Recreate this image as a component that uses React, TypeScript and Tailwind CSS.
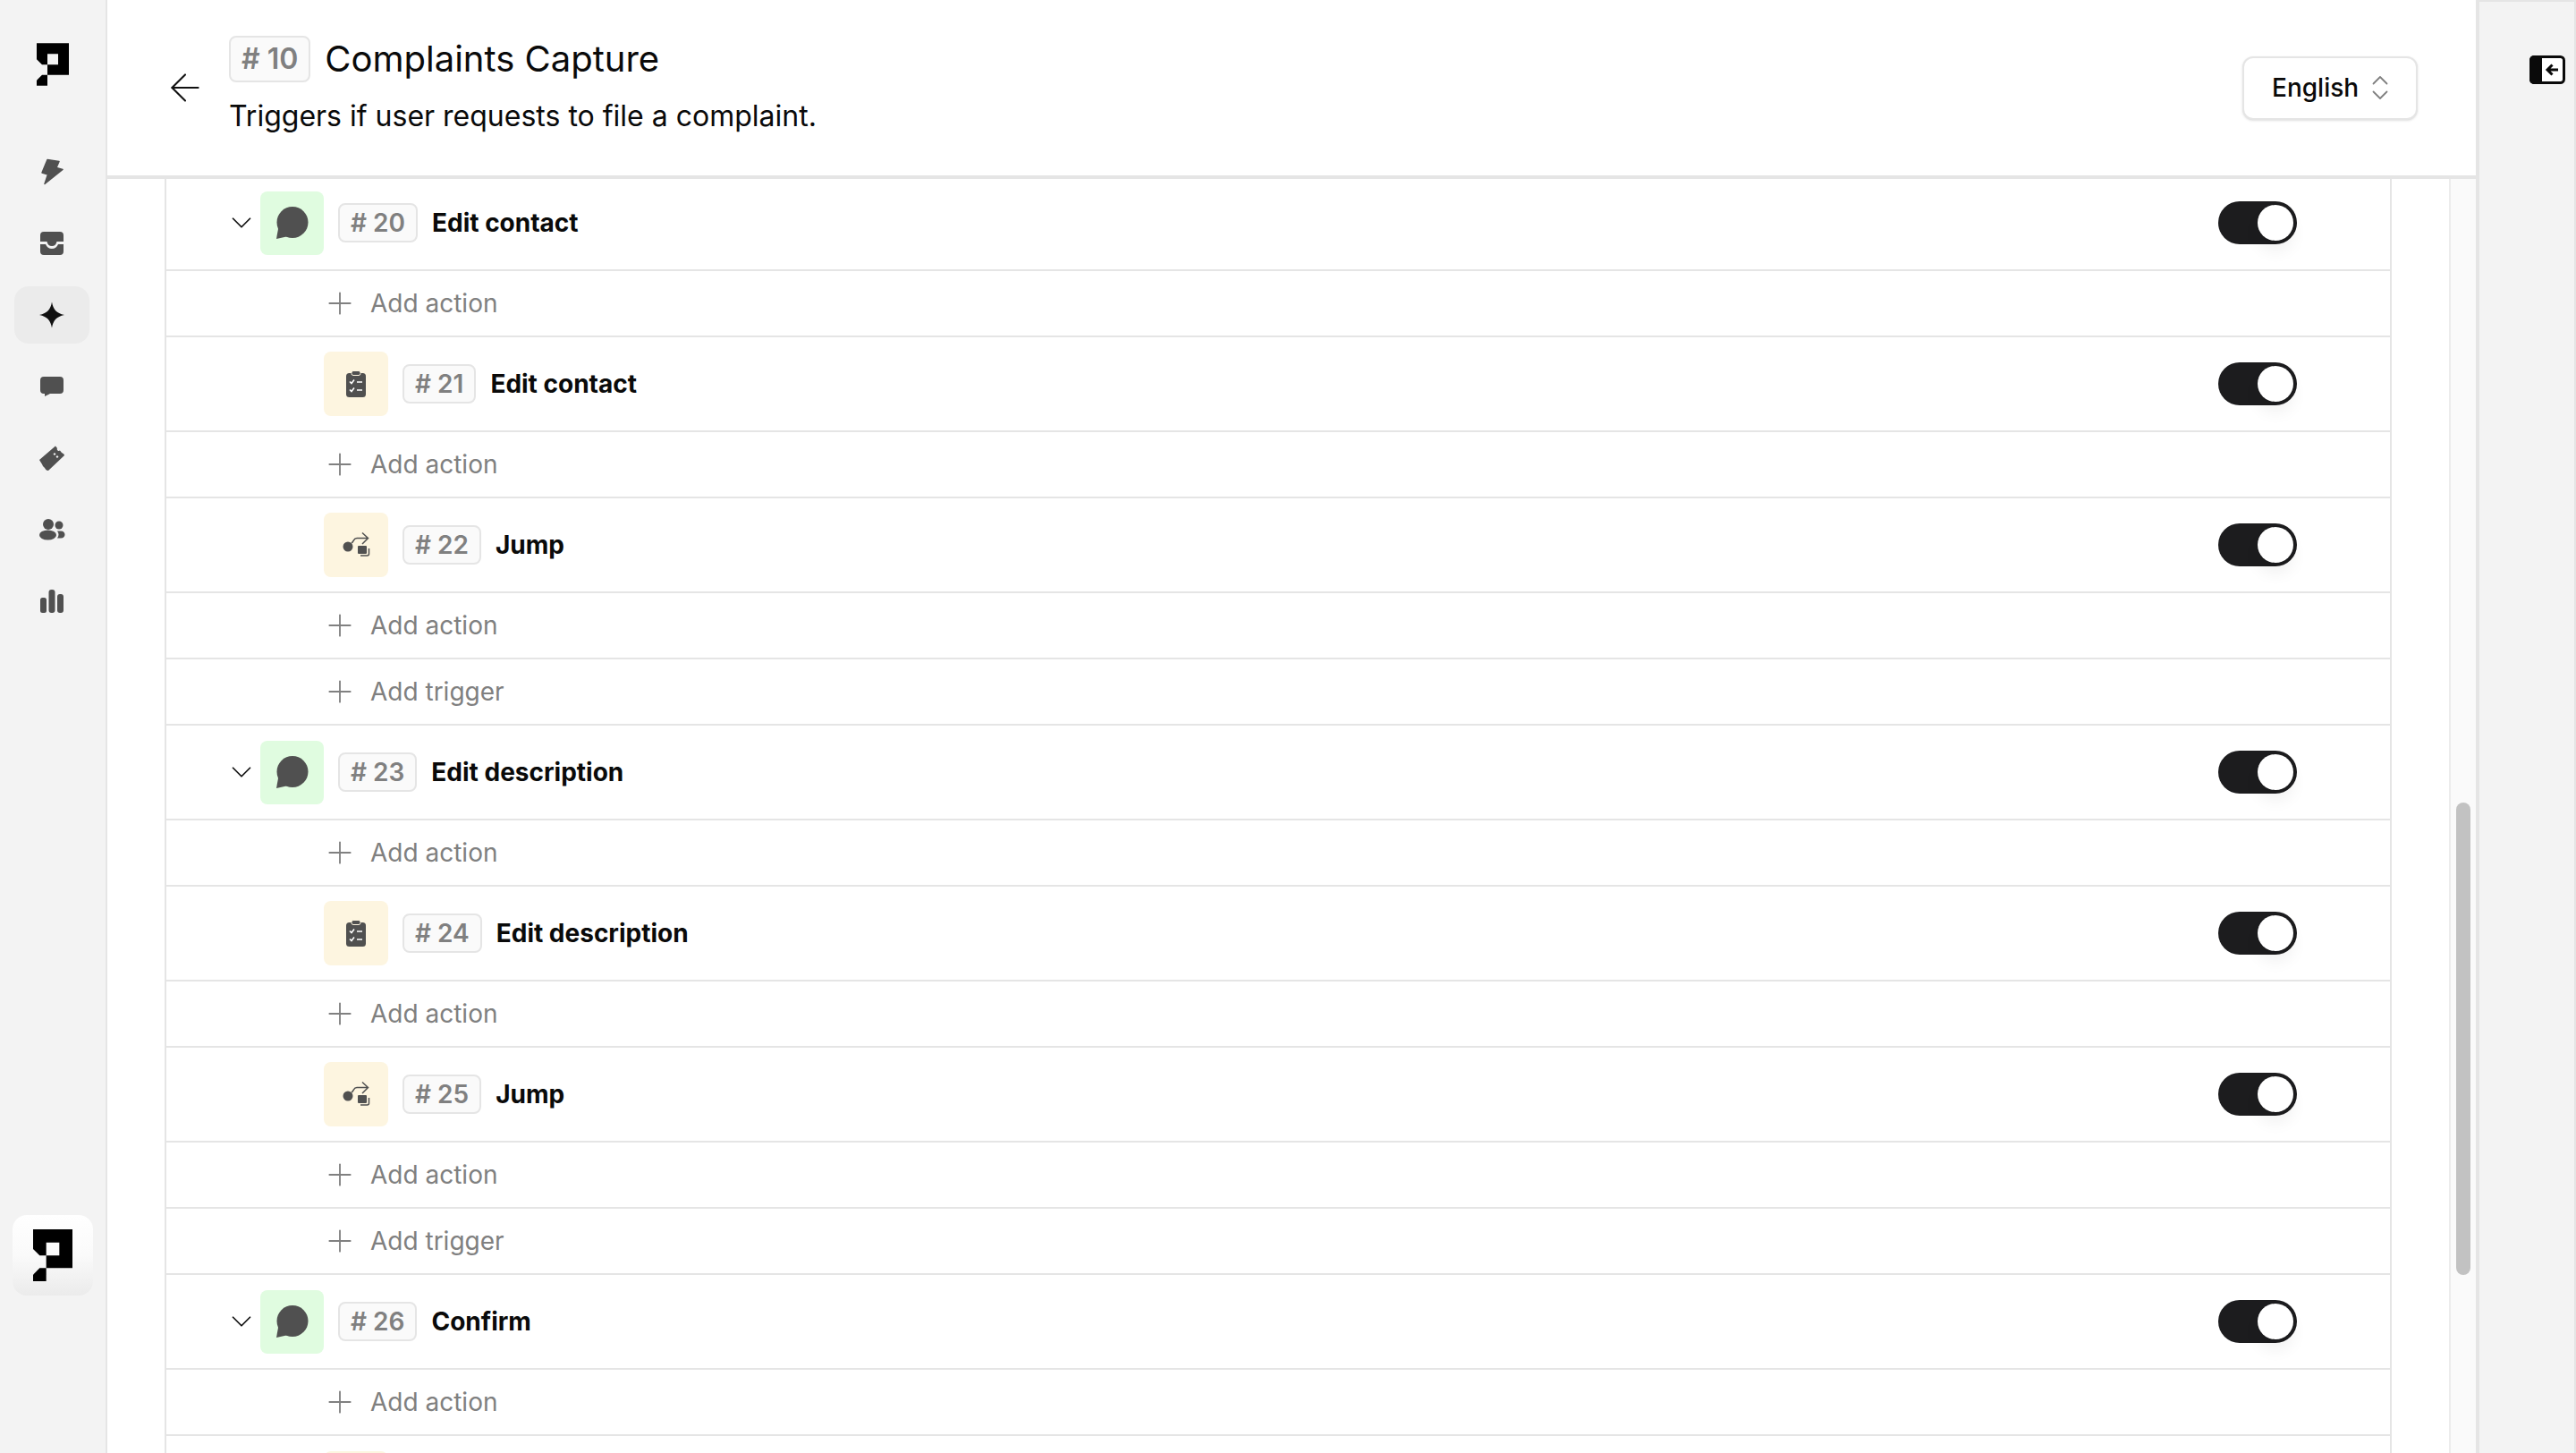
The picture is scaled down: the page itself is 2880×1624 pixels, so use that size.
import { ArrowLeft, ChevronDown, ChevronsUpDown, Plus } from 'lucide-react'

type Row =
  | { kind: 'trigger' | 'edit' | 'jump'; id: number; label: string }
  | { kind: 'add'; label: string }
  | { kind: 'stub' }

const rows: Row[] = [
  { kind: 'trigger', id: 20, label: 'Edit contact' },
  { kind: 'add', label: 'Add action' },
  { kind: 'edit', id: 21, label: 'Edit contact' },
  { kind: 'add', label: 'Add action' },
  { kind: 'jump', id: 22, label: 'Jump' },
  { kind: 'add', label: 'Add action' },
  { kind: 'add', label: 'Add trigger' },
  { kind: 'trigger', id: 23, label: 'Edit description' },
  { kind: 'add', label: 'Add action' },
  { kind: 'edit', id: 24, label: 'Edit description' },
  { kind: 'add', label: 'Add action' },
  { kind: 'jump', id: 25, label: 'Jump' },
  { kind: 'add', label: 'Add action' },
  { kind: 'add', label: 'Add trigger' },
  { kind: 'trigger', id: 26, label: 'Confirm' },
  { kind: 'add', label: 'Add action' },
  { kind: 'stub' },
]

function Logo({ className }: { className: string }) {
  return (
    <svg viewBox="0 0 132 174" className={className} fill="#000">
      <path fillRule="evenodd" d="M0 0H132V130H44V88H22L0 66ZM44 44V88H88V44Z" />
      <path d="M44 130V174H0V152L22 130Z" />
    </svg>
  )
}

function NavIcons({ index }: { index: number }) {
  const fill = index === 2 ? '#111111' : '#505050'
  return (
    <svg width="30" height="30" viewBox="0 0 30 30" fill={fill}>
      {index === 0 && (
        <path
          stroke={fill}
          strokeWidth="1.5"
          strokeLinejoin="round"
          d="M10 1.500 L23 3.500 L20 10.500 L27 12.500 L7 28.500 L10.500 18 L4 16 Z"
        />
      )}
      {index === 1 && (
        <>
          <path d="M6 2H24a4 4 0 0 1 4 4V13H20.500C20 16 18 18 15 18S10 16 9.500 13H2V6a4 4 0 0 1 4-4Z" />
          <path d="M2 16H8C9 19 12 21 15 21S21 19 22 16H28V24a4 4 0 0 1-4 4H6a4 4 0 0 1-4-4Z" />
        </>
      )}
      {index === 2 && <path d="M15 0.500C16.500 9 20 13 29 15C20 17 16.500 21 15 29.500C13.500 21 10 17 1 15C10 13 13.500 9 15 0.500Z" />}
      {index === 3 && (
        <path d="M6 4H24a4 4 0 0 1 4 4V19a4 4 0 0 1-4 4H13L7 26V23H6a4 4 0 0 1-4-4V8a4 4 0 0 1 4-4Z" />
      )}
      {index === 4 && (
        <path d="M1 17L19 1.500L21 4A2 2 0 0 0 24 6.500L26 9C28 10 29 11 29 12L11 29C9 29 8 28 7 26L5 24C4 21 2 19 1 17ZM18 9L16.500 10.500L18 12L19.500 10.500ZM21 12L19.500 13.500L21 15L22.500 13.500Z" fillRule="evenodd" />
      )}
      {index === 5 && (
        <>
          <circle cx="11" cy="9" r="6" />
          <circle cx="23" cy="10" r="4.500" />
          <ellipse cx="10.500" cy="21" rx="9.500" ry="5.500" />
          <path d="M21 16.500H25C28 16.500 29.500 18.500 29.500 20.500S28 24.500 25 24.500H21C23 22 23 19 21 16.500Z" />
        </>
      )}
      {index === 6 && (
        <>
          <rect x="2" y="11" width="7" height="17" rx="2.500" />
          <rect x="11.500" y="2" width="7" height="26" rx="3" />
          <rect x="21" y="7" width="7" height="21" rx="3" />
        </>
      )}
    </svg>
  )
}

function Sidebar() {
  return (
    <aside className="w-[120px] shrink-0 h-full bg-[#f3f3f3] border-r-2 border-[#e5e5e5] flex flex-col items-center">
      <Logo className="w-[36px] h-[48px] mt-[48px] mb-[64px]" />
      <nav className="flex flex-col gap-[16px] -ml-[2px]">
        {[0, 1, 2, 3, 4, 5, 6].map((i) => (
          <div
            key={i}
            className={`w-[84px] h-[64px] rounded-[16px] flex items-center justify-center ${i === 2 ? 'bg-[#ebebeb]' : ''}`}
          >
            <NavIcons index={i} />
          </div>
        ))}
      </nav>
      <div className="mt-auto mb-[176px] w-[90px] h-[90px] rounded-[16px] bg-gradient-to-b from-white via-[#fafafa] to-[#ebebeb] flex items-center justify-center">
        <Logo className="w-[44px] h-[58px]" />
      </div>
    </aside>
  )
}

function Badge({ id, large }: { id: number; large?: boolean }) {
  return (
    <span
      className={`inline-flex items-center justify-center shrink-0 border-2 border-[#e5e5e5] bg-[#fafafa] rounded-[8px] font-semibold text-[#808080] ${
        large ? 'h-[52px] px-[12px] text-[32px]' : 'h-[44px] px-[12px] text-[28px]'
      }`}
    >
      # {id}
    </span>
  )
}

function Toggle() {
  return (
    <div className="w-[88px] h-[48px] rounded-full bg-[#1c1c1e] flex items-center justify-end p-[4px] shrink-0">
      <div className="w-[40px] h-[40px] rounded-full bg-white shadow-[0_12px_18px_rgba(0,0,0,0.06)]" />
    </div>
  )
}

function MessageIcon() {
  return (
    <svg width="36" height="36" viewBox="0 0 36 36" fill="#505050">
      <circle cx="18" cy="17.500" r="17.500" />
      <path d="M2.500 22L0 36L13.500 33Z" />
    </svg>
  )
}

function ClipboardIcon() {
  return (
    <svg width="22" height="30" viewBox="0 0 22 30" fill="#505050">
      <rect x="0" y="3" width="22" height="27" rx="3.500" />
      <rect x="6" y="0.500" width="10" height="5" rx="2" stroke="#fdf5e0" strokeWidth="1" />
      <path d="M4 12.500L6 14.500L9 10.500M4 21.500L6 23.500L9 19.500M12 13H18M12 22H18" fill="none" stroke="#ffffff" strokeWidth="1.600" />
    </svg>
  )
}

function JumpIcon() {
  return (
    <svg width="32" height="30" viewBox="0 0 32 30" fill="#505050" className="ml-[2px]">
      <circle cx="6" cy="17" r="5.500" />
      <rect x="17" y="16" width="10" height="9" rx="1" />
      <path
        d="M29.500 19V25a2 2 0 0 1-2 2H20M10 13C13 11 12 7.500 16 7.500H28.500M22 1.500L28.500 7.500L22 14"
        fill="none"
        stroke="#505050"
        strokeWidth="1.500"
      />
    </svg>
  )
}

function ListRow({ row }: { row: Row }) {
  if (row.kind === 'stub') {
    return (
      <div className="h-[106px] flex items-center">
        <div className="ml-[176px] w-[72px] h-[72px] rounded-[8px] bg-[#fdf5e0]" />
      </div>
    )
  }
  if (row.kind === 'add') {
    return (
      <div className="h-[74px] border-b-2 border-[#e5e5e5] flex items-center pl-[174px] gap-[14px] text-[28px] text-[#808080]">
        <Plus size={40} strokeWidth={1.1} color="#808080" />
        <span>{row.label}</span>
      </div>
    )
  }
  const isTrigger = row.kind === 'trigger'
  return (
    <div className="h-[106px] border-b-2 border-[#e5e5e5] flex items-center pr-[104px]">
      {isTrigger ? (
        <div className="flex items-center pl-[65px] gap-[2px]">
          <ChevronDown size={38} strokeWidth={1.1} color="#111111" />
          <div className="w-[71px] h-[71px] rounded-[8px] bg-[#e0fce0] flex items-center justify-center">
            <MessageIcon />
          </div>
        </div>
      ) : (
        <div className="ml-[176px] w-[72px] h-[72px] rounded-[8px] bg-[#fdf5e0] flex items-center justify-center">
          {row.kind === 'edit' ? <ClipboardIcon /> : <JumpIcon />}
        </div>
      )}
      <div className="ml-[16px] mr-[16px]">
        <Badge id={row.id} />
      </div>
      <span className="flex-1 text-[28px] font-bold text-[#0a0a0a]">{row.label}</span>
      <Toggle />
    </div>
  )
}

export default function App() {
  return (
    <div className="w-[2880px] h-[1624px] overflow-hidden flex bg-white font-[Inter,sans-serif]">
      <Sidebar />
      <main className="w-[2648px] shrink-0 h-full flex flex-col">
        <header className="relative z-10 h-[200px] shrink-0 bg-white border-b-4 border-[#e5e5e5] flex items-center pl-[67px] pr-[65px]">
          <ArrowLeft size={50} strokeWidth={1} color="#111111" className="-ml-[5px] mr-[24px]" />
          <div className="flex-1 pb-[7px]">
            <div className="flex items-center gap-[16px] mb-[19px]">
              <Badge id={10} large />
              <h1 className="text-[40px] leading-[52px] text-[#0a0a0a]">Complaints Capture</h1>
            </div>
            <p className="text-[32px] leading-[38px] text-[#0a0a0a]">Triggers if user requests to file a complaint.</p>
          </div>
          <button className="h-[71px] w-[196px] rounded-[12px] border-2 border-[#e5e5e5] bg-white shadow-sm flex items-center pl-[31px] gap-[6px] text-[28px] font-medium text-[#0a0a0a]">
            English
            <ChevronsUpDown size={36} strokeWidth={1.2} color="#808080" />
          </button>
        </header>
        <div className="flex-1 min-h-0 flex -mt-[3px]">
          <div className="flex-1 min-w-0 pl-[64px] pr-[64px]">
            <div className="border-x-2 border-[#e5e5e5]">
              {rows.map((row, i) => (
                <ListRow key={i} row={row} />
              ))}
            </div>
          </div>
          <div className="w-[30px] shrink-0 h-full bg-[#fafafa] border-l-2 border-[#ececec] pl-[6px] pt-[700px]">
            <div className="w-[16px] h-[528px] rounded-full bg-[#c2c2c2]" />
          </div>
        </div>
      </main>
      <aside className="flex-1 h-full bg-[#f3f3f3] border-l-4 border-r-2 border-t-2 border-[#e5e5e5] flex justify-end pt-[60px] pr-[10px]">
        <svg width="40" height="32" viewBox="0 0 40 32" className="shrink-0">
          <rect x="1.500" y="1.500" width="37" height="29" rx="4" fill="#fff" stroke="#0a0a0a" strokeWidth="3" />
          <path d="M5 0H14V32H5a5 5 0 0 1-5-5V5a5 5 0 0 1 5-5Z" fill="#0a0a0a" />
          <path d="M32 16H20M25.500 10.500L20 16L25.500 21.500" fill="none" stroke="#0a0a0a" strokeWidth="3" />
        </svg>
      </aside>
    </div>
  )
}
